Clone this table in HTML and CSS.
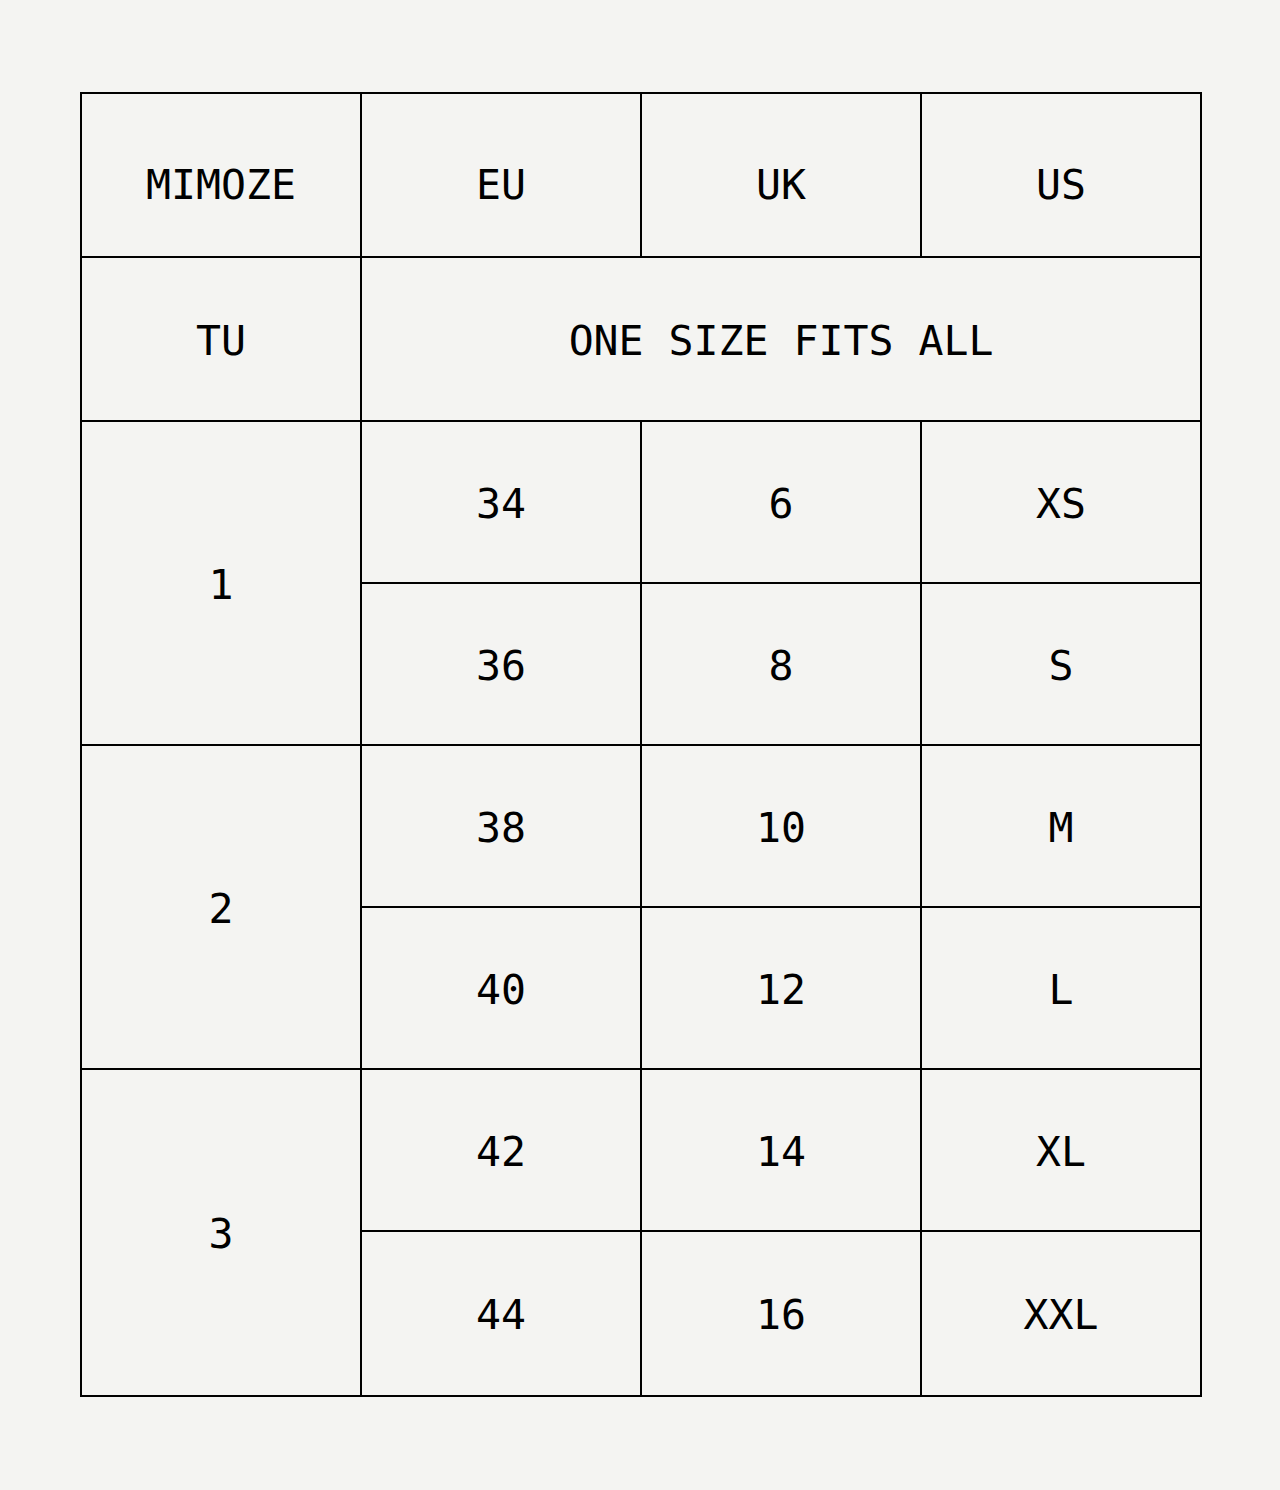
FILE: index.html
```html
<!DOCTYPE html>
<html>
<head>
<meta charset="utf-8">
<link rel="stylesheet" href="styles.css">
</head>
<body>
<div class="chart">
  <div class="cell head">MIMOZE</div>
  <div class="cell head">EU</div>
  <div class="cell head">UK</div>
  <div class="cell head">US</div>

  <div class="cell">TU</div>
  <div class="cell span3">ONE SIZE FITS ALL</div>

  <div class="cell span2">1</div>
  <div class="cell">34</div>
  <div class="cell">6</div>
  <div class="cell">XS</div>
  <div class="cell">36</div>
  <div class="cell">8</div>
  <div class="cell">S</div>

  <div class="cell span2">2</div>
  <div class="cell">38</div>
  <div class="cell">10</div>
  <div class="cell">M</div>
  <div class="cell">40</div>
  <div class="cell">12</div>
  <div class="cell">L</div>

  <div class="cell span2">3</div>
  <div class="cell">42</div>
  <div class="cell">14</div>
  <div class="cell">XL</div>
  <div class="cell">44</div>
  <div class="cell">16</div>
  <div class="cell">XXL</div>
</div>
</body>
</html>
```
FILE: styles.css
```css
html, body {
  margin: 0;
  padding: 0;
  background: #f4f4f2;
}
body {
  padding: 92px 0 0 80px;
  font-family: "DejaVu Sans Mono", "Liberation Mono", monospace;
  color: #000;
}
.chart {
  display: grid;
  grid-template-columns: repeat(4, 278px);
  grid-template-rows: 162px 162px 160px 160px 160px 160px 160px 163px;
  gap: 2px;
  padding: 2px;
  background: #000;
  width: max-content;
}
.cell {
  background: #f4f4f2;
  display: flex;
  align-items: center;
  justify-content: center;
  font-size: 41.5px;
  line-height: 1;
  padding-top: 3px;
}
.head {
  padding-top: 20px;
}
.span3 {
  grid-column: span 3;
}
.span2 {
  grid-row: span 2;
}
```
